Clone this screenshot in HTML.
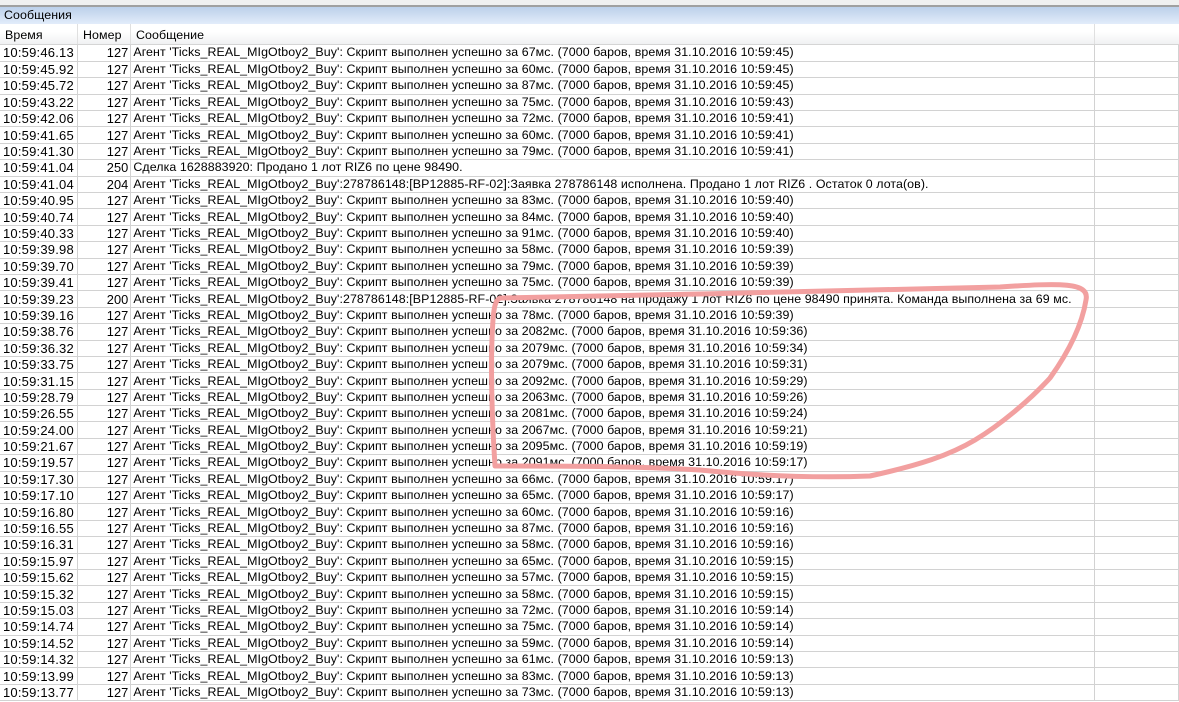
<!DOCTYPE html>
<html><head><meta charset="utf-8"><style>
body{margin:0;width:1179px;height:702px;overflow:hidden;background:#fff;font-family:"Liberation Sans","DejaVu Sans",sans-serif;font-size:12.4px;letter-spacing:0.08px;color:#000;position:relative}
.top{position:absolute;left:0;top:0;width:1179px;height:5px;background:#f0f0f0;border-bottom:2px solid #a0a0a0}
.title{position:absolute;left:0;top:7px;width:1179px;height:17px;background:linear-gradient(#bcd0ea,#e2ecfa);line-height:17px;padding-left:4px;box-sizing:border-box}
.hdr{position:absolute;left:0;top:24px;width:1179px;height:21px;background:linear-gradient(#fff 40%,#f0f1f3);border-bottom:1px solid #d5d5d5;box-sizing:border-box}
.hdr div{position:absolute;top:0;height:20px;line-height:22px;border-right:1px solid #e0e0e0;padding-left:5px;box-sizing:border-box}
table{position:absolute;left:0;top:45px;border-collapse:collapse;table-layout:fixed}
td{height:16.4px;padding:0 2px;border-bottom:1px solid #d2d2d2;border-right:1px solid #d2d2d2;white-space:nowrap;overflow:hidden;line-height:15px;box-sizing:border-box}
td:first-child{padding-left:3px;font-size:13px;letter-spacing:0.2px}
td:nth-child(2){text-align:right;font-size:12.8px}
svg{position:absolute;left:0;top:0}
</style></head><body>
<div class="top"></div>
<div class="title">Сообщения</div>
<div class="hdr"><div style="left:0;width:78px">Время</div><div style="left:78px;width:53px">Номер</div><div style="left:131px;width:964px">Сообщение</div></div>
<table>
<colgroup><col style="width:78px"><col style="width:53px"><col style="width:964px"><col style="width:84px"></colgroup>
<tr><td>10:59:46.13</td><td>127</td><td>Агент 'Ticks_REAL_MIgOtboy2_Buy': Скрипт выполнен успешно за 67мс. (7000 баров, время 31.10.2016 10:59:45)</td><td></td></tr>
<tr><td>10:59:45.92</td><td>127</td><td>Агент 'Ticks_REAL_MIgOtboy2_Buy': Скрипт выполнен успешно за 60мс. (7000 баров, время 31.10.2016 10:59:45)</td><td></td></tr>
<tr><td>10:59:45.72</td><td>127</td><td>Агент 'Ticks_REAL_MIgOtboy2_Buy': Скрипт выполнен успешно за 87мс. (7000 баров, время 31.10.2016 10:59:45)</td><td></td></tr>
<tr><td>10:59:43.22</td><td>127</td><td>Агент 'Ticks_REAL_MIgOtboy2_Buy': Скрипт выполнен успешно за 75мс. (7000 баров, время 31.10.2016 10:59:43)</td><td></td></tr>
<tr><td>10:59:42.06</td><td>127</td><td>Агент 'Ticks_REAL_MIgOtboy2_Buy': Скрипт выполнен успешно за 72мс. (7000 баров, время 31.10.2016 10:59:41)</td><td></td></tr>
<tr><td>10:59:41.65</td><td>127</td><td>Агент 'Ticks_REAL_MIgOtboy2_Buy': Скрипт выполнен успешно за 60мс. (7000 баров, время 31.10.2016 10:59:41)</td><td></td></tr>
<tr><td>10:59:41.30</td><td>127</td><td>Агент 'Ticks_REAL_MIgOtboy2_Buy': Скрипт выполнен успешно за 79мс. (7000 баров, время 31.10.2016 10:59:41)</td><td></td></tr>
<tr><td>10:59:41.04</td><td>250</td><td>Сделка 1628883920: Продано 1 лот RIZ6 по цене 98490.</td><td></td></tr>
<tr><td>10:59:41.04</td><td>204</td><td>Агент 'Ticks_REAL_MIgOtboy2_Buy':278786148:[BP12885-RF-02]:Заявка 278786148 исполнена. Продано 1 лот RIZ6 . Остаток 0 лота(ов).</td><td></td></tr>
<tr><td>10:59:40.95</td><td>127</td><td>Агент 'Ticks_REAL_MIgOtboy2_Buy': Скрипт выполнен успешно за 83мс. (7000 баров, время 31.10.2016 10:59:40)</td><td></td></tr>
<tr><td>10:59:40.74</td><td>127</td><td>Агент 'Ticks_REAL_MIgOtboy2_Buy': Скрипт выполнен успешно за 84мс. (7000 баров, время 31.10.2016 10:59:40)</td><td></td></tr>
<tr><td>10:59:40.33</td><td>127</td><td>Агент 'Ticks_REAL_MIgOtboy2_Buy': Скрипт выполнен успешно за 91мс. (7000 баров, время 31.10.2016 10:59:40)</td><td></td></tr>
<tr><td>10:59:39.98</td><td>127</td><td>Агент 'Ticks_REAL_MIgOtboy2_Buy': Скрипт выполнен успешно за 58мс. (7000 баров, время 31.10.2016 10:59:39)</td><td></td></tr>
<tr><td>10:59:39.70</td><td>127</td><td>Агент 'Ticks_REAL_MIgOtboy2_Buy': Скрипт выполнен успешно за 79мс. (7000 баров, время 31.10.2016 10:59:39)</td><td></td></tr>
<tr><td>10:59:39.41</td><td>127</td><td>Агент 'Ticks_REAL_MIgOtboy2_Buy': Скрипт выполнен успешно за 75мс. (7000 баров, время 31.10.2016 10:59:39)</td><td></td></tr>
<tr><td>10:59:39.23</td><td>200</td><td>Агент 'Ticks_REAL_MIgOtboy2_Buy':278786148:[BP12885-RF-02]:Заявка 278786148 на продажу 1 лот RIZ6 по цене 98490 принята. Команда выполнена за 69 мс.</td><td></td></tr>
<tr><td>10:59:39.16</td><td>127</td><td>Агент 'Ticks_REAL_MIgOtboy2_Buy': Скрипт выполнен успешно за 78мс. (7000 баров, время 31.10.2016 10:59:39)</td><td></td></tr>
<tr><td>10:59:38.76</td><td>127</td><td>Агент 'Ticks_REAL_MIgOtboy2_Buy': Скрипт выполнен успешно за 2082мс. (7000 баров, время 31.10.2016 10:59:36)</td><td></td></tr>
<tr><td>10:59:36.32</td><td>127</td><td>Агент 'Ticks_REAL_MIgOtboy2_Buy': Скрипт выполнен успешно за 2079мс. (7000 баров, время 31.10.2016 10:59:34)</td><td></td></tr>
<tr><td>10:59:33.75</td><td>127</td><td>Агент 'Ticks_REAL_MIgOtboy2_Buy': Скрипт выполнен успешно за 2079мс. (7000 баров, время 31.10.2016 10:59:31)</td><td></td></tr>
<tr><td>10:59:31.15</td><td>127</td><td>Агент 'Ticks_REAL_MIgOtboy2_Buy': Скрипт выполнен успешно за 2092мс. (7000 баров, время 31.10.2016 10:59:29)</td><td></td></tr>
<tr><td>10:59:28.79</td><td>127</td><td>Агент 'Ticks_REAL_MIgOtboy2_Buy': Скрипт выполнен успешно за 2063мс. (7000 баров, время 31.10.2016 10:59:26)</td><td></td></tr>
<tr><td>10:59:26.55</td><td>127</td><td>Агент 'Ticks_REAL_MIgOtboy2_Buy': Скрипт выполнен успешно за 2081мс. (7000 баров, время 31.10.2016 10:59:24)</td><td></td></tr>
<tr><td>10:59:24.00</td><td>127</td><td>Агент 'Ticks_REAL_MIgOtboy2_Buy': Скрипт выполнен успешно за 2067мс. (7000 баров, время 31.10.2016 10:59:21)</td><td></td></tr>
<tr><td>10:59:21.67</td><td>127</td><td>Агент 'Ticks_REAL_MIgOtboy2_Buy': Скрипт выполнен успешно за 2095мс. (7000 баров, время 31.10.2016 10:59:19)</td><td></td></tr>
<tr><td>10:59:19.57</td><td>127</td><td>Агент 'Ticks_REAL_MIgOtboy2_Buy': Скрипт выполнен успешно за 2091мс. (7000 баров, время 31.10.2016 10:59:17)</td><td></td></tr>
<tr><td>10:59:17.30</td><td>127</td><td>Агент 'Ticks_REAL_MIgOtboy2_Buy': Скрипт выполнен успешно за 66мс. (7000 баров, время 31.10.2016 10:59:17)</td><td></td></tr>
<tr><td>10:59:17.10</td><td>127</td><td>Агент 'Ticks_REAL_MIgOtboy2_Buy': Скрипт выполнен успешно за 65мс. (7000 баров, время 31.10.2016 10:59:17)</td><td></td></tr>
<tr><td>10:59:16.80</td><td>127</td><td>Агент 'Ticks_REAL_MIgOtboy2_Buy': Скрипт выполнен успешно за 60мс. (7000 баров, время 31.10.2016 10:59:16)</td><td></td></tr>
<tr><td>10:59:16.55</td><td>127</td><td>Агент 'Ticks_REAL_MIgOtboy2_Buy': Скрипт выполнен успешно за 87мс. (7000 баров, время 31.10.2016 10:59:16)</td><td></td></tr>
<tr><td>10:59:16.31</td><td>127</td><td>Агент 'Ticks_REAL_MIgOtboy2_Buy': Скрипт выполнен успешно за 58мс. (7000 баров, время 31.10.2016 10:59:16)</td><td></td></tr>
<tr><td>10:59:15.97</td><td>127</td><td>Агент 'Ticks_REAL_MIgOtboy2_Buy': Скрипт выполнен успешно за 65мс. (7000 баров, время 31.10.2016 10:59:15)</td><td></td></tr>
<tr><td>10:59:15.62</td><td>127</td><td>Агент 'Ticks_REAL_MIgOtboy2_Buy': Скрипт выполнен успешно за 57мс. (7000 баров, время 31.10.2016 10:59:15)</td><td></td></tr>
<tr><td>10:59:15.32</td><td>127</td><td>Агент 'Ticks_REAL_MIgOtboy2_Buy': Скрипт выполнен успешно за 58мс. (7000 баров, время 31.10.2016 10:59:15)</td><td></td></tr>
<tr><td>10:59:15.03</td><td>127</td><td>Агент 'Ticks_REAL_MIgOtboy2_Buy': Скрипт выполнен успешно за 72мс. (7000 баров, время 31.10.2016 10:59:14)</td><td></td></tr>
<tr><td>10:59:14.74</td><td>127</td><td>Агент 'Ticks_REAL_MIgOtboy2_Buy': Скрипт выполнен успешно за 75мс. (7000 баров, время 31.10.2016 10:59:14)</td><td></td></tr>
<tr><td>10:59:14.52</td><td>127</td><td>Агент 'Ticks_REAL_MIgOtboy2_Buy': Скрипт выполнен успешно за 59мс. (7000 баров, время 31.10.2016 10:59:14)</td><td></td></tr>
<tr><td>10:59:14.32</td><td>127</td><td>Агент 'Ticks_REAL_MIgOtboy2_Buy': Скрипт выполнен успешно за 61мс. (7000 баров, время 31.10.2016 10:59:13)</td><td></td></tr>
<tr><td>10:59:13.99</td><td>127</td><td>Агент 'Ticks_REAL_MIgOtboy2_Buy': Скрипт выполнен успешно за 83мс. (7000 баров, время 31.10.2016 10:59:13)</td><td></td></tr>
<tr><td>10:59:13.77</td><td>127</td><td>Агент 'Ticks_REAL_MIgOtboy2_Buy': Скрипт выполнен успешно за 73мс. (7000 баров, время 31.10.2016 10:59:13)</td><td></td></tr>
</table>
<svg width="1179" height="702"><path d="M500,298 C650,295 900,290 1000,287 C1060,283 1090,282 1086,300 C1082,325 1070,350 1050,378 C1030,400 1000,425 975,440 C950,455 920,465 870,476 C820,478 760,476 700,470 C640,466 560,466 495,466 C492,420 490,360 493,320 C494,305 496,300 500,298 Z" fill="none" stroke="#f2a0a0" stroke-width="5" stroke-linejoin="round"/></svg>
</body></html>
